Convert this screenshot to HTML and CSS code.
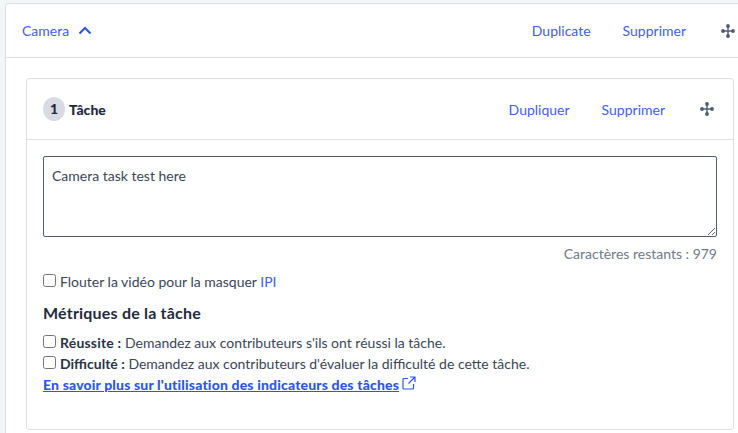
FILE: index.html
```html
<!DOCTYPE html>
<html lang="fr">
<head>
<meta charset="utf-8">
<title>Camera</title>
<link rel="stylesheet" href="styles.css">
</head>
<body>
<section class="outer">
  <header class="outer-head">
    <a class="link" href="#">Camera</a>
    <svg class="chev" width="14" height="9" viewBox="0 0 14 9"><path d="M1.500 7.500 7 2l5.500 5.500" fill="none" stroke="#2f55d4" stroke-width="2"/></svg>
    <span class="spacer"></span>
    <a class="link dup-a" href="#">Duplicate</a>
    <a class="link sup-a" href="#">Supprimer</a>
    <svg class="move" width="14" height="14" viewBox="0 0 14 14"><use href="#mv"/></svg>
  </header>
  <div class="outer-body">
    <section class="task">
      <header class="task-head">
        <span class="num">1</span>
        <strong class="task-title">Tâche</strong>
        <span class="spacer"></span>
        <a class="link dup-b" href="#">Dupliquer</a>
        <a class="link sup-b" href="#">Supprimer</a>
        <svg class="move" width="14" height="14" viewBox="0 0 14 14"><use href="#mv"/></svg>
      </header>
      <div class="task-body">
        <textarea class="area">Camera task test here</textarea>
        <div class="count">Caractères restants : 979</div>
        <label class="check blur"><input type="checkbox"><span>Flouter la vidéo pour la masquer <a class="link" href="#">IPI</a></span></label>
        <h3 class="metrics">Métriques de la tâche</h3>
        <label class="check"><input type="checkbox"><span><b class="lead">Réussite :</b> Demandez aux contributeurs s'ils ont réussi la tâche.</span></label>
        <label class="check"><input type="checkbox"><span><b>Difficulté :</b> Demandez aux contributeurs d'évaluer la difficulté de cette tâche.</span></label>
        <div class="more"><a class="more-link" href="#">En savoir plus sur l'utilisation des indicateurs des tâches</a>
          <svg class="ext" width="14" height="14" viewBox="0 0 14 14"><path d="M6 2.500H2A1 1 0 0 0 1 3.500v8.500a1 1 0 0 0 1 1h8.500a1 1 0 0 0 1-1V8M8 1h5v5M13 1 6.500 7.500" fill="none" stroke="#2f55e8" stroke-width="1.200"/></svg>
        </div>
      </div>
    </section>
  </div>
</section>
<svg class="defs" width="0" height="0"><defs><g id="mv" fill="#4f5d70"><path d="M6.300 3h1.400v8H6.300zM3 6.300h8v1.400H3z"/><circle cx="7" cy="2" r="1.900"/><circle cx="7" cy="12" r="1.900"/><circle cx="2" cy="7" r="1.900"/><circle cx="12" cy="7" r="1.900"/></g></defs></svg>
</body>
</html>
```
FILE: styles.css
```css
* { box-sizing: border-box; }
html, body { height: 100%; }
body {
  margin: 0;
  padding: 3px 0 0 5px;
  background: #f3f6f7;
  font-family: "Lato", "Liberation Sans", sans-serif;
  font-size: 14px;
  color: #3a4658;
  overflow: hidden;
}
.defs { display: block; }
.outer {
  width: 740px;
  height: 440px;
  background: #fff;
  border: 1px solid #dcdfe4;
  border-radius: 3px 0 0 0;
}
.outer-head {
  height: 54px;
  display: flex;
  align-items: center;
  padding-left: 16px;
  border-bottom: 1px solid #dcdfe4;
}
.link { color: #3f60e8; text-decoration: none; }
.chev { margin-left: 9px; }
.spacer { flex: 1; }
.dup-a { margin-right: 32px; }
.sup-a { margin-right: 35px; }
.outer-head .move { margin-right: 9px; }
.outer-body { padding: 20px 0 0 20px; }
.task {
  width: 708px;
  height: 352px;
  border: 1px solid #dcdfe4;
  border-radius: 3px;
}
.task-head {
  height: 61px;
  display: flex;
  align-items: center;
  padding: 0 19px 0 16px;
  border-bottom: 1px solid #dcdfe4;
}
.num {
  width: 22px;
  height: 24px;
  padding-bottom: 2px;
  border-radius: 50%;
  background: #d8dbe1;
  display: flex;
  align-items: center;
  justify-content: center;
  font-weight: 900;
  color: #1f2b3d;
}
.task-title { margin-left: 4px; font-size: 14px; font-weight: 900; color: #1f2b3d; }
.dup-b { margin-right: 32px; }
.sup-b { margin-right: 35px; }
.task-body { padding: 16px 16px 0; }
.area {
  display: block;
  width: 100%;
  height: 81px;
  padding: 10px 8px;
  border: 1px solid #4f5d70;
  border-radius: 2px;
  font: inherit;
  color: #3a4658;
}
.count { margin-top: 8px; text-align: right; color: #6e7a8a; line-height: 18px; }
.check { display: flex; align-items: center; line-height: 21px; }
.check input { margin: -2px 4px 0 0; width: 13px; height: 13px; }
.check b { color: #2a3547; }
.lead { letter-spacing: 0.2px; }
.blur { margin-top: 8px; }
.metrics { margin: 11px 0 9px; font-size: 16px; font-weight: 700; line-height: 20px; letter-spacing: 0.2px; color: #1f2b3d; }
.more { display: flex; align-items: center; line-height: 21px; }
.more-link { color: #2f55e8; font-weight: 900; font-size: 14px; letter-spacing: 0.16px; text-decoration: underline; }
.ext { margin: -4px 0 0 3px; }
```
